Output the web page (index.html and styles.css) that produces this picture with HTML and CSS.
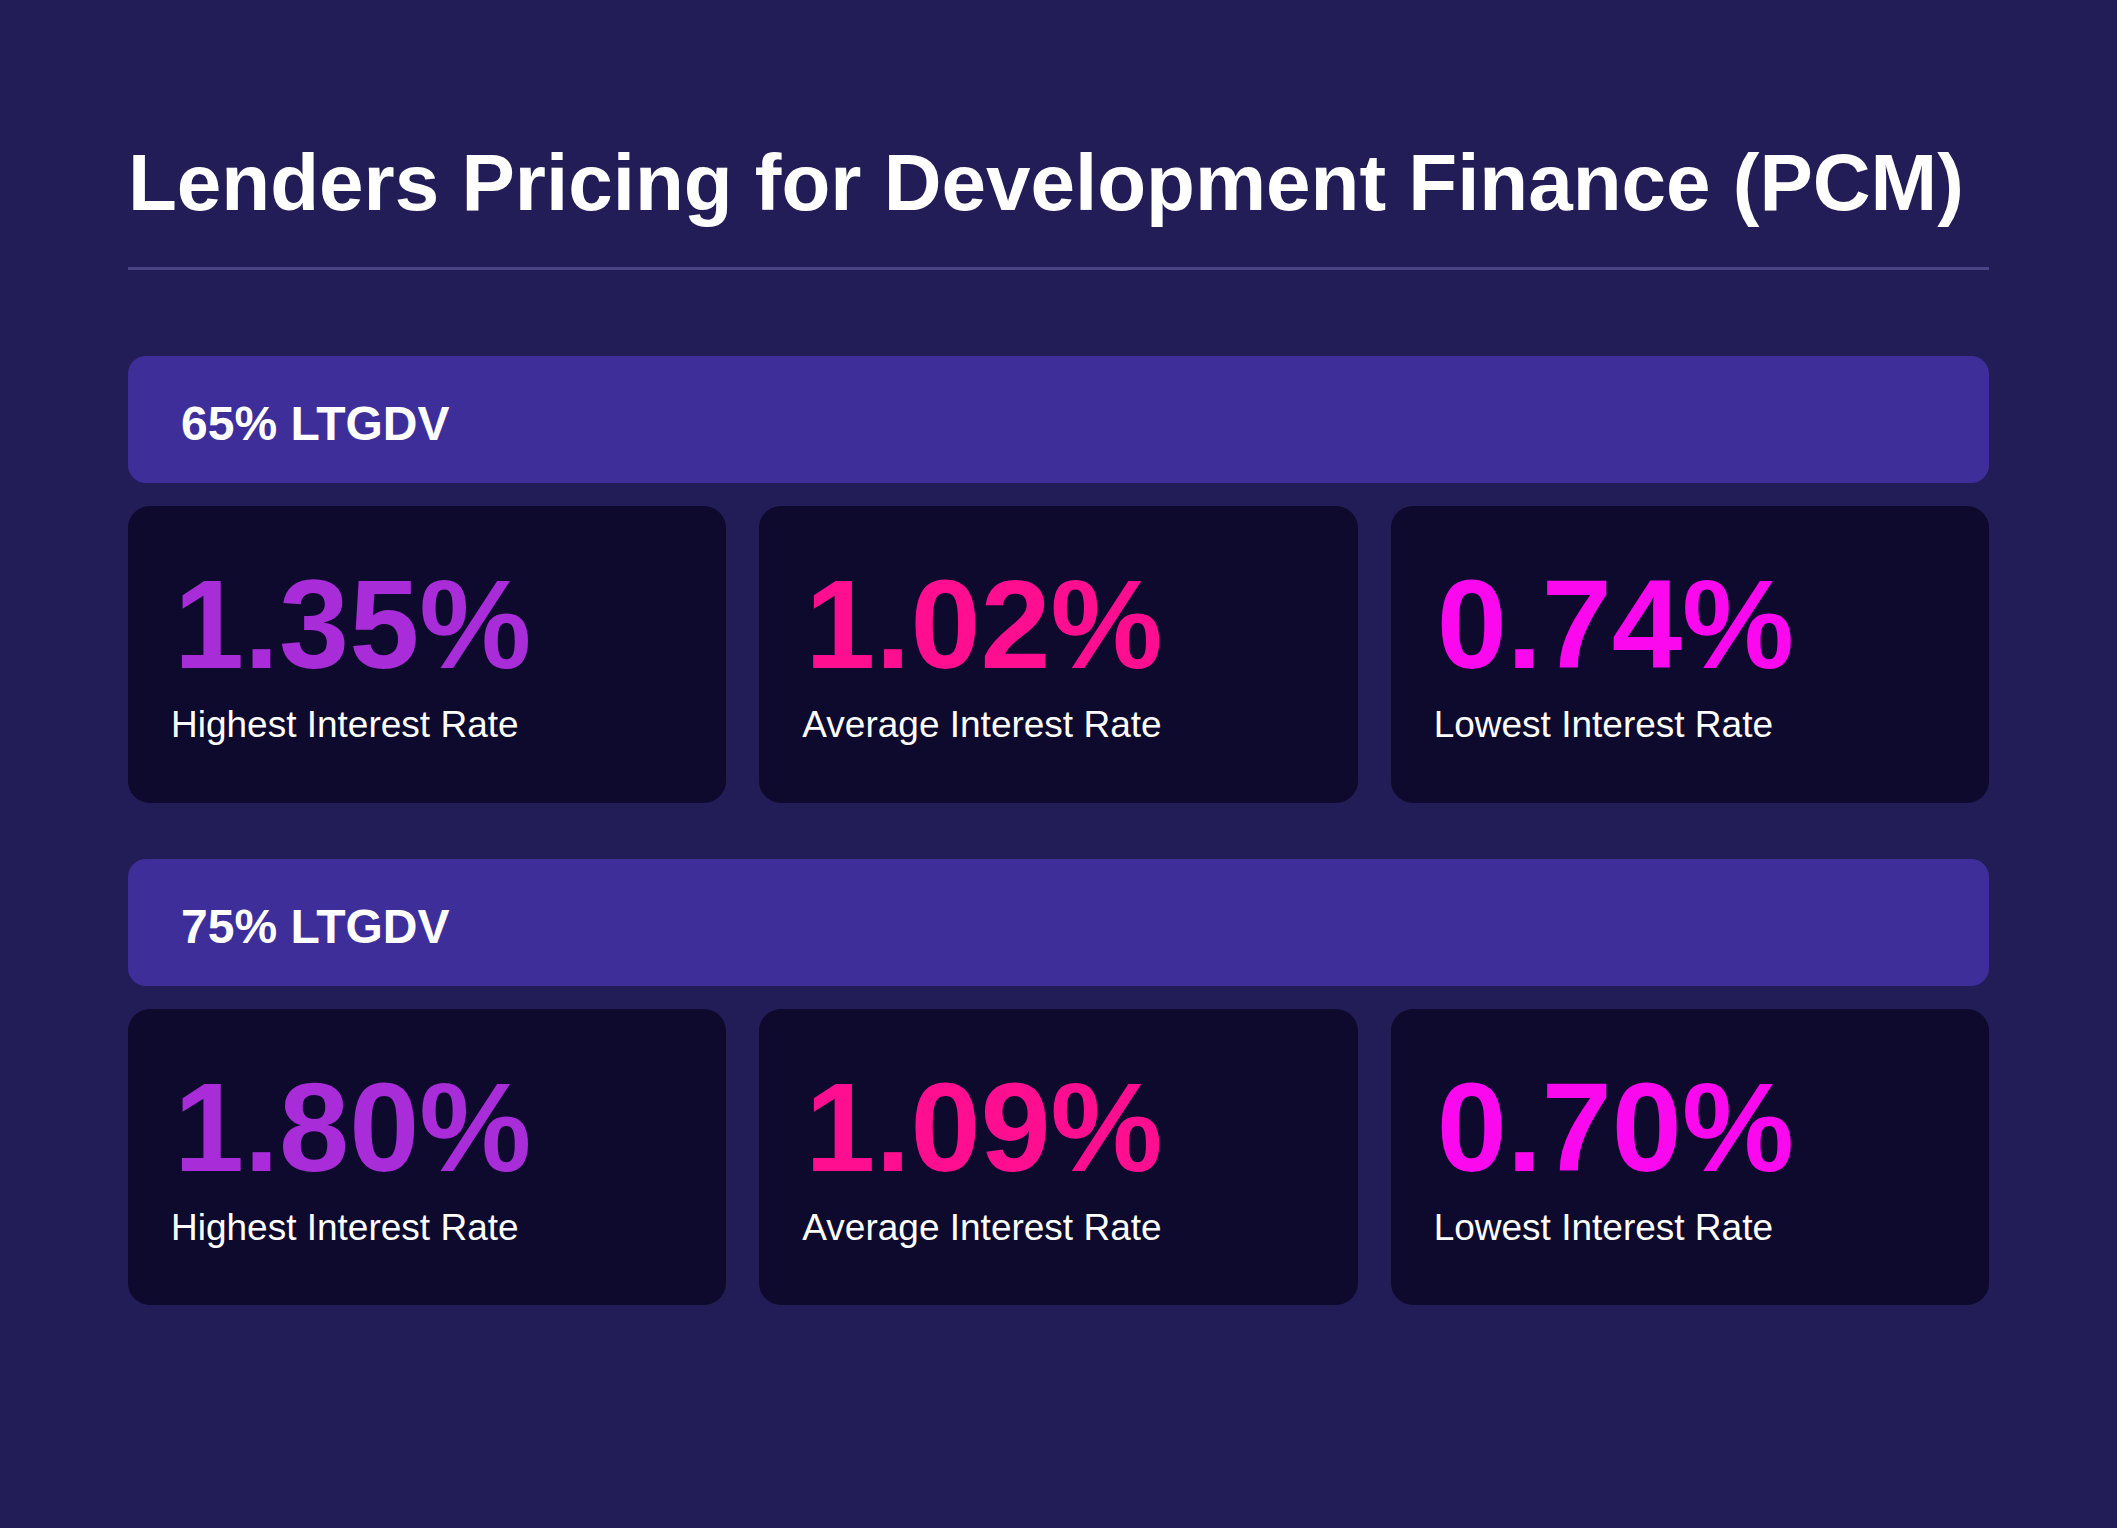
FILE: index.html
```html
<!DOCTYPE html>
<html lang="en">
<head>
<meta charset="utf-8">
<title>Lenders Pricing for Development Finance (PCM)</title>
<link rel="stylesheet" href="styles.css">
</head>
<body>
<main class="page">
  <h1 class="title">Lenders Pricing for Development Finance (PCM)</h1>

  <section class="section">
    <div class="band">65% LTGDV</div>
    <div class="cards">
      <div class="card">
        <div class="value high">1.35%</div>
        <div class="label">Highest Interest Rate</div>
      </div>
      <div class="card">
        <div class="value avg">1.02%</div>
        <div class="label">Average Interest Rate</div>
      </div>
      <div class="card">
        <div class="value low">0.74%</div>
        <div class="label">Lowest Interest Rate</div>
      </div>
    </div>
  </section>

  <section class="section">
    <div class="band">75% LTGDV</div>
    <div class="cards">
      <div class="card">
        <div class="value high">1.80%</div>
        <div class="label">Highest Interest Rate</div>
      </div>
      <div class="card">
        <div class="value avg">1.09%</div>
        <div class="label">Average Interest Rate</div>
      </div>
      <div class="card">
        <div class="value low">0.70%</div>
        <div class="label">Lowest Interest Rate</div>
      </div>
    </div>
  </section>
</main>
</body>
</html>
```
FILE: styles.css
```css
html, body {
  margin: 0;
  padding: 0;
  background: #221d56;
}

body {
  font-family: "Liberation Sans", Arial, sans-serif;
  color: #ffffff;
  min-height: 1528px;
}

.page {
  padding: 137px 128px 0 128px;
}

.title {
  margin: 0;
  font-size: 80px;
  font-weight: 700;
  line-height: 1.15;
  padding-bottom: 38px;
  border-bottom: 3px solid #4a4584;
}

.section {
  margin-top: 56px;
}

.section:first-of-type {
  margin-top: 86px;
}

.band {
  background: #3e2e9a;
  border-radius: 18px;
  padding: 40px 53px 32px;
  font-size: 48px;
  font-weight: 700;
  line-height: 1.15;
}

.cards {
  display: grid;
  grid-template-columns: repeat(3, 1fr);
  gap: 33px;
  margin-top: 23px;
}

.card {
  background: #0d0a2d;
  border-radius: 22px;
  padding: 56px 40px 56px 43px;
}

.value {
  margin-left: 3px;
  font-size: 126px;
  font-weight: 700;
  line-height: 1;
}

.value.high { color: #a82dd8; }
.value.avg { color: #ff0f8f; }
.value.low { color: #fb08ee; }

.label {
  margin-top: 16px;
  font-size: 37px;
  line-height: 1.15;
  color: #ffffff;
}
```
